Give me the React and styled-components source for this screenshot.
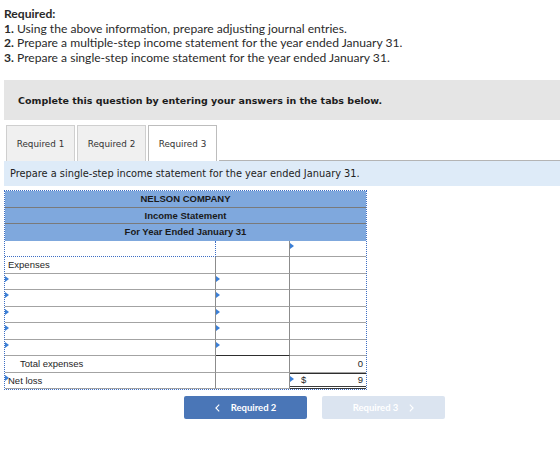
import React from "react";
import styled, { createGlobalStyle, css } from "styled-components";

const GlobalStyle = createGlobalStyle`
  html, body {
    margin: 0;
    padding: 0;
    background: #ffffff;
  }
  body {
    font-family: Lato, "Open Sans", sans-serif;
    color: #222;
  }
`;

const Page = styled.div`
  padding: 7px 0 0 4px;
  width: 556px;
`;

const Instructions = styled.div`
  font-family: Lato, "Open Sans", sans-serif;
  font-size: 12.1px;
  line-height: 14.5px;
  color: #2a2a2a;
`;

const Line = styled.div`
  white-space: nowrap;
`;

const Banner = styled.div`
  margin-top: 15px;
  height: 40px;
  background: #e5e5e5;
  display: flex;
  align-items: center;
  padding-left: 14px;
  font-family: "DejaVu Sans", Verdana, sans-serif;
  font-weight: bold;
  font-size: 9.5px;
  color: #1c1c1c;
  white-space: nowrap;
`;

const TabBar = styled.div`
  margin-top: 5px;
  display: flex;
  align-items: stretch;
  height: 36px;
  padding-left: 2px;
  gap: 2px;
`;

const Tab = styled.div`
  width: 69px;
  box-sizing: border-box;
  display: flex;
  align-items: center;
  justify-content: center;
  border: 1px solid #cfcfcf;
  border-bottom: none;
  background: #f0f0f0;
  font-family: "DejaVu Sans", Verdana, sans-serif;
  font-size: 8.8px;
  color: #333;
  ${(p) =>
    p.$active &&
    css`
      background: #ffffff;
      border-color: #bdbdbd;
    `}
`;

const TabFiller = styled.div`
  flex: 1;
  border-bottom: 1px solid #b4b4b4;
`;

const Prompt = styled.div`
  height: 25px;
  background: #deebf8;
  display: flex;
  align-items: center;
  padding-left: 6px;
  font-family: "DejaVu Sans", Verdana, sans-serif;
  font-size: 9.8px;
  color: #222;
  white-space: nowrap;
`;

const Sheet = styled.div`
  margin-top: 4px;
  width: 363px;
  box-sizing: border-box;
  border: 1px dotted #3d6ec4;
  font-family: "Liberation Sans", Arial, sans-serif;
  font-size: 9.5px;
  color: #1e1e1e;
`;

const HeadRow = styled.div`
  height: 16.5px;
  box-sizing: border-box;
  background: #7fa8dd;
  border-bottom: 1px solid ${(p) => (p.$last ? "#7fa8dd" : "#7a7a7a")};
  display: flex;
  align-items: center;
  justify-content: center;
  font-weight: bold;
  color: #1a1a1a;
`;

const Row = styled.div`
  display: grid;
  grid-template-columns: 211px 74px 76px;
  height: 16.5px;
`;

const Cell = styled.div`
  position: relative;
  box-sizing: border-box;
  display: flex;
  align-items: center;
  padding: 0 3px;
  background: #ffffff;
  border-bottom: 1px solid #a3a3a3;
  border-right: ${(p) => (p.$end ? "none" : "1px solid #8c8c8c")};
  justify-content: ${(p) => (p.$right ? "flex-end" : "flex-start")};
  ${(p) =>
    p.$indent &&
    css`
      padding-left: 15px;
    `}
  ${(p) =>
    p.$dotted &&
    css`
      border-bottom: 1px dotted #3d6ec4;
      border-right: 1px dotted #3d6ec4;
    `}
  ${(p) =>
    p.$rule &&
    css`
      border-bottom: 1px solid #2e2e2e;
    `}
  ${(p) =>
    p.$total &&
    css`
      border-top: 1px solid #2e2e2e;
      border-bottom: 3px double #3a3a3a;
      justify-content: space-between;
      padding-left: 11px;
    `}
  ${(p) =>
    p.$marker &&
    css`
      &::before {
        content: "";
        position: absolute;
        left: 0;
        top: 2px;
        border-left: 4px solid #3b7fd6;
        border-top: 3px solid transparent;
        border-bottom: 3px solid transparent;
      }
    `}
`;

const Buttons = styled.div`
  display: flex;
  gap: 15px;
  margin-top: 6px;
  padding-left: 180px;
`;

const NavButton = styled.div`
  width: 123px;
  height: 23px;
  border-radius: 2px;
  display: flex;
  align-items: center;
  justify-content: center;
  gap: 11px;
  font-family: Lato, "Open Sans", sans-serif;
  font-weight: bold;
  font-size: 9.5px;
  color: #ffffff;
  background: ${(p) => (p.$muted ? "#dbe4f0" : "#4a76b7")};
`;

const Chevron = ({ dir }) => (
  <svg width="5" height="8" viewBox="0 0 5 8" fill="none">
    <polyline
      points={dir === "left" ? "4.2,0.6 0.9,4 4.2,7.4" : "0.8,0.6 4.1,4 0.8,7.4"}
      stroke="#ffffff"
      strokeWidth="1.1"
    />
  </svg>
);

const rows = [
  { a: "", dotted: true, cMark: true },
  { a: "Expenses" },
  { aMark: true, bMark: true },
  { aMark: true, bMark: true },
  { aMark: true, bMark: true },
  { aMark: true, bMark: true },
  { aMark: true, bMark: true, bRule: true },
  { a: "Total expenses", indent: true, c: "0" },
  { a: "Net loss", aMark: true, cMark: true, total: true },
];

export default function App() {
  return (
    <>
      <GlobalStyle />
      <Page>
        <Instructions>
          <Line>
            <b>Required:</b>
          </Line>
          <Line>
            <b>1.</b> Using the above information, prepare adjusting journal entries.
          </Line>
          <Line>
            <b>2.</b> Prepare a multiple-step income statement for the year ended January 31.
          </Line>
          <Line>
            <b>3.</b> Prepare a single-step income statement for the year ended January 31.
          </Line>
        </Instructions>

        <Banner>Complete this question by entering your answers in the tabs below.</Banner>

        <TabBar>
          <Tab>Required 1</Tab>
          <Tab>Required 2</Tab>
          <Tab $active>Required 3</Tab>
          <TabFiller />
        </TabBar>

        <Prompt>Prepare a single-step income statement for the year ended January 31.</Prompt>

        <Sheet>
          <HeadRow>NELSON COMPANY</HeadRow>
          <HeadRow>Income Statement</HeadRow>
          <HeadRow $last>For Year Ended January 31</HeadRow>
          {rows.map((r, i) => (
            <Row key={i}>
              <Cell $marker={r.aMark} $dotted={r.dotted} $indent={r.indent}>
                {r.a}
              </Cell>
              <Cell $marker={r.bMark} $rule={r.bRule} />
              <Cell $end $right $marker={r.cMark} $total={r.total}>
                {r.total ? (
                  <>
                    <span>$</span>
                    <span>9</span>
                  </>
                ) : (
                  r.c
                )}
              </Cell>
            </Row>
          ))}
        </Sheet>

        <Buttons>
          <NavButton>
            <Chevron dir="left" />
            <span>Required 2</span>
          </NavButton>
          <NavButton $muted>
            <span>Required 3</span>
            <Chevron dir="right" />
          </NavButton>
        </Buttons>
      </Page>
    </>
  );
}
